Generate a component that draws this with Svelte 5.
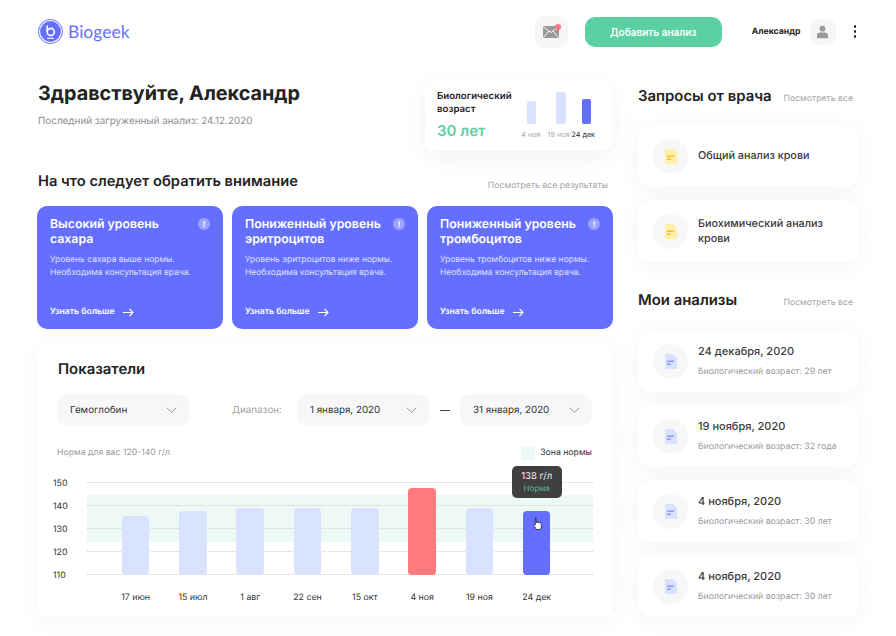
<script>
  const alerts = [
    { t: 'Высокий уровень сахара', d: 'Уровень сахара выше нормы.' },
    { t: 'Пониженный уровень эритроцитов', d: 'Уровень эритроцитов ниже нормы.' },
    { t: 'Пониженный уровень тромбоцитов', d: 'Уровень тромбоцитов ниже нормы.' }
  ];
  const requests = ['Общий анализ крови', 'Биохимический анализ крови'];
  const tests = [
    { d: '24 декабря, 2020', a: 'Биологический возраст: 29 лет' },
    { d: '19 ноября, 2020', a: 'Биологический возраст: 32 года' },
    { d: '4 ноября, 2020', a: 'Биологический возраст: 30 лет' },
    { d: '4 ноября, 2020', a: 'Биологический возраст: 30 лет' }
  ];
  const ticks = [150, 140, 130, 120, 110];
  const bars = [
    { l: '17 июн', h: 59 }, { l: '15 июл', h: 64 }, { l: '1 авг', h: 67 }, { l: '22 сен', h: 67 },
    { l: '15 окт', h: 67 }, { l: '4 ноя', h: 87, k: 'red' }, { l: '19 ноя', h: 67 }, { l: '24 дек', h: 64, k: 'cur' }
  ];
</script>

{#snippet doc(fill, line)}
  <svg width="12" height="15" viewBox="0 0 12 15"><path d="M1 0h7l4 4v10a1 1 0 0 1-1 1H1a1 1 0 0 1-1-1V1a1 1 0 0 1 1-1z" fill={fill}/><rect x="2" y="6.5" width="7" height="1.5" rx=".5" fill={line}/><rect x="2" y="9.5" width="4" height="1.5" rx=".5" fill={line}/></svg>
{/snippet}

{#snippet chev()}
  <svg class="chev" width="11" height="6" viewBox="0 0 11 6"><path d="M.7.7l4.800 4.600L10.300.7" fill="none" stroke="#9a9a9a" stroke-width="1"/></svg>
{/snippet}

<div class="page">
  <header>
    <div class="logo">
      <svg width="25" height="25" viewBox="0 0 25 25"><circle cx="12.5" cy="12.5" r="12" fill="none" stroke="#646fff"/><circle cx="12.5" cy="12.5" r="10.4" fill="#646fff"/><circle cx="12.8" cy="13" r="3.6" fill="none" stroke="#fff" stroke-width="1.6"/><path d="M9.2 6.5V13" stroke="#fff" stroke-width="1.6" fill="none"/><path d="M9 19.3h7" stroke="#fff"/></svg>
      <span>Biogeek</span>
    </div>
    <div class="head-right">
      <button class="iconbtn mail" aria-label="Почта">
        <svg width="16" height="12" viewBox="0 0 16 12"><rect width="16" height="12" rx="1.5" fill="#9a9a9a"/><path d="M.5 1l7.500 5.500L15.500 1M.5 11.500l5.500-6.500M15.500 11.500l-5.500-6.500" fill="none" stroke="#f6f6f6"/></svg>
        <i></i>
      </button>
      <button class="add">Добавить анализ</button>
      <span class="user">Александр</span>
      <button class="iconbtn avatar" aria-label="Профиль">
        <svg width="11" height="14" viewBox="0 0 13 15"><circle cx="6.500" cy="3.600" r="3.400" fill="#9a9a9a"/><path d="M0 15v-3.500C0 9 2 8 3.500 8h6C11 8 13 9 13 11.500V15z" fill="#9a9a9a"/></svg>
      </button>
      <div class="dots"><b></b><b></b><b></b></div>
    </div>
  </header>

  <div class="columns">
    <main>
      <section class="hello">
        <div>
          <h1>Здравствуйте, Александр</h1>
          <p>Последний загруженный анализ: 24.12.2020</p>
        </div>
        <div class="age">
          <div class="age-text">
            <strong>Биологический возраст</strong>
            <em>30 лет</em>
          </div>
          <div class="age-bars">
            <div><u class="s1"></u><span>4 ноя</span></div>
            <div><u class="s2"></u><span>19 ноя</span></div>
            <div class="on"><u class="s3"></u><span>24 дек</span></div>
          </div>
        </div>
      </section>

      <div class="sec-head">
        <h2>На что следует обратить внимание</h2>
        <a href="#a">Посмотреть все результаты</a>
      </div>

      <div class="alerts">
        {#each alerts as a}
          <article>
            <div class="a-top"><h3>{a.t}</h3><i>!</i></div>
            <p>{a.d}<br />Необходима консультация врача.</p>
            <div class="more">Узнать больше
              <svg width="11" height="9" viewBox="0 0 11 9"><path d="M0 4.500h10M6.500 1L10 4.500 6.500 8" fill="none" stroke="#fff" stroke-width="1.100"/></svg>
            </div>
          </article>
        {/each}
      </div>

      <section class="panel">
        <h2>Показатели</h2>
        <div class="filters">
          <div class="sel first">Гемоглобин {@render chev()}</div>
          <span class="range">Диапазон:</span>
          <div class="sel">1 января, 2020 {@render chev()}</div>
          <span class="dash"></span>
          <div class="sel">31 января, 2020 {@render chev()}</div>
        </div>
        <div class="legend">
          <span>Норма для вас 120-140 г/л</span>
          <span class="zone"><i></i>Зона нормы</span>
        </div>
        <div class="chart">
          <div class="axis">{#each ticks as t}<span>{t}</span>{/each}</div>
          <div class="plot">
            <div class="band"></div>
            <div class="lines">{#each ticks as t}<hr />{/each}</div>
            <div class="bars">
              {#each bars as b}
                <div class="slot">
                  {#if b.k === 'cur'}
                    <div class="tip">138 г/л<small>Норма</small></div>
                  {/if}
                  <div class="bar {b.k ?? ''}" style="height:{b.h}px">
                    {#if b.k === 'cur'}
                      <svg class="hand" width="10" height="13" viewBox="0 0 10 13"><path d="M2.200 1c.7 0 1 .4 1 1v3.500l1-.3 1 .2 1 .2 1.300.4c.5.3.8.700.8 1.500v2.500L7.500 12.500H3.500L.8 8.500c-.3-.6.2-1.300.9-.9l.6.500V2c0-.6.200-1 .9-1z" fill="#fff" stroke="#222" stroke-width=".8"/></svg>
                    {/if}
                  </div>
                </div>
              {/each}
            </div>
          </div>
          <div class="labels">{#each bars as b}<span>{b.l}</span>{/each}</div>
        </div>
      </section>
    </main>

    <aside>
      <div class="side-head"><h2>Запросы от врача</h2><a href="#r">Посмотреть все</a></div>
      <div class="list">
        {#each requests as r}
          <div class="row req">
            <div class="ic">{@render doc('#ffefa8', '#fdb92c')}</div>
            <div class="r-title">{r}</div>
          </div>
        {/each}
      </div>
      <div class="side-head second"><h2>Мои анализы</h2><a href="#t">Посмотреть все</a></div>
      <div class="list tests">
        {#each tests as t}
          <div class="row">
            <div class="ic">{@render doc('#d9e3ff', '#8d97ff')}</div>
            <div>
              <div class="r-title">{t.d}</div>
              <div class="r-sub">{t.a}</div>
            </div>
          </div>
        {/each}
      </div>
    </aside>
  </div>
</div>

<style>
  :global(body) { margin: 0; background: #fff; }
  .page { width: 896px; height: 636px; overflow: hidden; box-sizing: border-box; padding: 16px 37px 0 37px; font-family: Inter, "Liberation Sans", sans-serif; color: #232323; text-rendering: geometricPrecision; }
  h1, h2, h3, p { margin: 0; }
  a { color: #a3a3a3; text-decoration: none; font-size: 8.700px; }
  button { border: 0; font: inherit; padding: 0; }

  header { display: flex; justify-content: space-between; align-items: center; height: 31px; padding-left: 1px; }
  .logo { display: flex; align-items: center; gap: 5px; color: #646fff; font-family: Lato, sans-serif; font-size: 17.500px; font-weight: 400; }
  .head-right { display: flex; align-items: center; }
  .iconbtn { background: #f6f6f6; display: flex; align-items: center; justify-content: center; position: relative; }
  .mail { width: 33px; height: 32px; border-radius: 10px; }
  .mail i { position: absolute; width: 6px; height: 6px; background: #ff7b7b; border-radius: 50%; top: 8.500px; left: 20px; }
  .add { width: 137px; height: 30px; margin-left: 17px; border-radius: 10px; background: #5bd0a5; color: #fff; font-size: 10px; font-weight: 600; }
  .user { margin-left: 30px; font-size: 8.700px; font-weight: 700; }
  .avatar { width: 26px; height: 26px; border-radius: 9px; margin-left: 9px; }
  .dots { display: flex; flex-direction: column; gap: 2.500px; margin-left: 18px; margin-right: 3px; }
  .dots b { width: 2.500px; height: 2.500px; background: #232323; border-radius: 50%; }

  .columns { display: grid; grid-template-columns: 576px 221px; gap: 25px; margin-top: 34px; }
  main, aside { min-width: 0; }

  .hello { display: flex; justify-content: space-between; height: 71px; }
  .hello > div:first-child { padding-left: 1px; }
  h1 { font-size: 19.800px; font-weight: 700; line-height: 25px; }
  .hello p { font-size: 9.900px; color: #8e8e8e; margin-top: 8px; line-height: 14px; }
  .age { width: 187px; height: 70px; margin-right: 1px; border-radius: 10px; background: #fff; box-shadow: 0 6px 24px rgba(30, 30, 60, .06); display: flex; box-sizing: border-box; padding: 9px 0 0 12px; justify-content: space-between; }
  .age-text strong { display: block; font-size: 9.700px; font-weight: 600; line-height: 13px; width: 84px; }
  .age-text em { display: block; font-style: normal; font-size: 15px; font-weight: 600; color: #5bd0a5; margin-top: 6px; line-height: 18px; }
  .age-bars { display: flex; gap: 5px; padding-right: 17px; align-items: flex-end; height: 49px; }
  .age-bars div { display: flex; flex-direction: column; align-items: center; gap: 7px; }
  .age-bars div:nth-child(2) { margin: 0 -3px 0 2px; }
  .age-bars u { width: 9.500px; border-radius: 2px; background: #d9e3ff; display: block; text-decoration: none; }
  .s1 { height: 23px; margin-left: 1px; } .s2 { height: 32px; margin-left: 5px; } .age-bars .s3 { height: 25px; margin-left: 7px; background: #646fff; }
  .age-bars span { font-size: 7.200px; color: #a8a8a8; white-space: nowrap; line-height: 8px; }
  .age-bars .on span { color: #232323; }

  .sec-head { display: flex; justify-content: space-between; align-items: center; margin-top: 19px; padding: 0 5px 0 1px; height: 20px; }
  .sec-head h2 { font-size: 14.700px; font-weight: 600; }
  .sec-head a { margin-top: 9px; }

  .alerts { display: grid; grid-template-columns: repeat(3, 186px); gap: 9px; margin-top: 15px; }
  article { background: #646fff; color: #fff; border-radius: 10px; height: 123px; box-sizing: border-box; padding: 10px 13px 0; position: relative; }
  .a-top { display: flex; justify-content: space-between; }
  h3 { font-size: 12.300px; font-weight: 600; line-height: 15px; width: 150px; }
  .a-top i { flex: none; width: 12px; height: 12px; border-radius: 50%; background: #9aa1ff; font-style: normal; font-size: 8px; font-weight: 700; text-align: center; line-height: 12px; margin: 2px 0 0; }
  article p { font-size: 8.500px; line-height: 13px; margin-top: 8px; color: #dfe1ff; white-space: nowrap; }
  .more { position: absolute; left: 13px; bottom: 12px; display: flex; align-items: center; gap: 8px; font-size: 8.700px; font-weight: 600; }

  .panel { background: #fff; border-radius: 10px; height: 271px; margin-top: 16px; box-sizing: border-box; padding: 14px 21px 0 20px; box-shadow: 0 4px 24px rgba(30, 30, 60, .05); }
  .panel h2 { font-size: 14.900px; font-weight: 600; line-height: 20px; margin-left: 1px; }
  .filters { display: flex; align-items: center; margin-top: 15px; }
  .sel { background: #f7f7f7; border-radius: 10px; height: 32px; width: 132px; box-sizing: border-box; padding: 0 12px 0 13px; display: flex; align-items: center; justify-content: space-between; font-size: 9.800px; color: #333; }
  .range { font-size: 9.800px; color: #a3a3a3; margin: 0 15px 0 43px; }
  .dash { width: 10px; height: 1px; background: #444; margin: 0 10px 0 11px; }
  .legend { display: flex; justify-content: space-between; align-items: center; margin-top: 20px; font-size: 8.700px; color: #9a9a9a; }
  .zone { display: flex; align-items: center; gap: 5px; color: #333; }
  .zone i { width: 14px; height: 14px; border-radius: 3px; background: #ecf9f5; }

  .chart { display: grid; grid-template-columns: 30px 506px; grid-template-rows: 92px auto; margin-top: 22px; position: relative; }
  .axis { display: flex; flex-direction: column; justify-content: space-between; font-size: 8.800px; color: #333; line-height: 10px; margin: -3px 0 0 -4px; height: 102px; }
  .plot { position: relative; height: 92px; margin-top: 4px; }
  .band { position: absolute; left: 0; right: 0; top: 9px; height: 47px; background: #ecf9f5; }
  .lines { position: absolute; inset: -4px 0 auto 0; height: 93px; display: flex; flex-direction: column; justify-content: space-between; }
  hr { margin: 0; border: 0; border-top: 1px dotted #d0d0d0; }
  .bars { position: absolute; left: 20px; right: 27px; top: 0; bottom: 3px; display: grid; grid-template-columns: repeat(8, 57.300px); align-items: end; justify-items: center; }
  .slot { position: relative; }
  .bar { width: 27.500px; border-radius: 4px; background: #d9e3ff; position: relative; }
  .bar.red { background: #ff7b7b; }
  .bar.cur { background: #646fff; }
  .hand { position: absolute; left: 10px; top: 6px; }
  .tip { position: absolute; bottom: calc(100% + 13px); left: 50%; transform: translateX(-50%); width: 50px; height: 32px; border-radius: 5px; background: #404040; color: #eee; font-size: 9.500px; text-align: center; line-height: 13px; padding-top: 4px; box-sizing: border-box; }
  .tip small { display: block; font-size: 8px; color: #56b893; line-height: 11px; }
  .labels { grid-column: 2; display: grid; grid-template-columns: repeat(8, 57.300px); padding-left: 20px; margin-top: 18px; font-size: 8.800px; color: #333; justify-items: center; }

  .side-head { display: flex; justify-content: space-between; align-items: center; height: 20px; margin-top: 5px; padding-right: 6px; }
  .side-head h2 { font-size: 14.900px; font-weight: 600; }
  .side-head a { margin-top: 5px; }
  .side-head.second { margin-top: 28px; }
  .list { display: flex; flex-direction: column; gap: 13px; margin-top: 19px; }
  .list.tests { margin-top: 20px; }
  .row { height: 62px; border-radius: 14px; background: #fff; box-shadow: 0 4px 22px rgba(30, 30, 60, .05); display: flex; align-items: center; gap: 10px; padding-left: 15px; }
  .ic { width: 35px; height: 35px; flex: none; border-radius: 50%; background: #f7f7f7; display: flex; align-items: center; justify-content: center; }
  .r-title { font-size: 10.800px; font-weight: 500; line-height: 14.500px; color: #3a3a3a; width: 140px; padding-top: 1px; }
  .row:not(.req) .r-title { width: auto; font-size: 11px; padding-top: 0; }
  .r-sub { font-size: 8.700px; color: #9a9a9a; margin-top: 8px; line-height: 11px; }
</style>
